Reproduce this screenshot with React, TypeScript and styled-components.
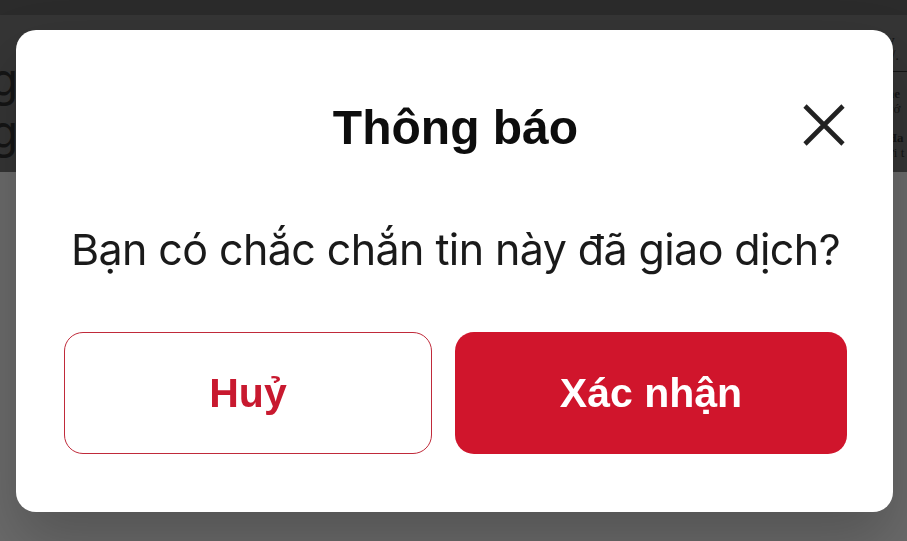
import React from 'react'
import styled, { createGlobalStyle } from 'styled-components'

const GlobalStyle = createGlobalStyle`
  html, body {
    margin: 0;
    padding: 0;
    background: #6b6b6b;
    overflow: hidden;
  }
  * {
    box-sizing: border-box;
  }
`

const Screen = styled.div`
  width: 907px;
  height: 541px;
  display: flex;
  flex-direction: column;
  overflow: hidden;
`

const StatusBar = styled.div`
  height: 15px;
  background: #2b2b2b;
`

const PageHeader = styled.div`
  height: 157px;
  background: #353535;
  display: flex;
  justify-content: space-between;
  overflow: hidden;
`

const HeaderLeft = styled.div`
  display: flex;
  flex-direction: column;
  padding-top: 38px;
  margin-left: -10px;
  font-family: Inter, sans-serif;
  font-size: 46px;
  line-height: 52px;
  color: #151515;
`

const HeaderRight = styled.div`
  width: 20px;
  padding-top: 18px;
  font-family: 'Liberation Serif', serif;
  color: #151515;
  display: flex;
  flex-direction: column;
`

const SideLine = styled.span<{ $bold?: boolean; $size?: number }>`
  font-size: ${p => p.$size || 13}px;
  font-weight: ${p => (p.$bold ? 700 : 400)};
  line-height: 15px;
  white-space: nowrap;
`

const SideRule = styled.div`
  height: 1px;
  background: #151515;
  margin: 8px 0 14px;
`

const SideGap = styled.div`
  height: 14px;
`

const PageBody = styled.div`
  flex: 1;
  background: #6b6b6b;
`

const Modal = styled.div`
  position: fixed;
  left: 16px;
  top: 30px;
  width: 877px;
  height: 482px;
  background: #ffffff;
  border-radius: 20px;
  box-shadow: 0 30px 60px rgba(0, 0, 0, 0.22);
  padding: 68px 46px 58px 48px;
  display: flex;
  flex-direction: column;
`

const ModalHeader = styled.div`
  display: grid;
  grid-template-columns: 1fr auto 1fr;
  align-items: center;
  height: 60px;
`

const Title = styled.h2`
  grid-column: 2;
  margin: 0;
  font-family: 'Liberation Sans', Arial, sans-serif;
  font-weight: 700;
  font-size: 48px;
  line-height: 60px;
  color: #0d0d0d;
`

const CloseButton = styled.button`
  grid-column: 3;
  justify-self: end;
  margin: -6px 0 0 0;
  width: 46px;
  height: 46px;
  padding: 0;
  border: none;
  background: transparent;
  display: flex;
  align-items: center;
  justify-content: center;
  cursor: pointer;
`

const Message = styled.p`
  margin: 65px 0 0;
  text-align: center;
  white-space: nowrap;
  font-family: Inter, sans-serif;
  font-size: 43px;
  letter-spacing: -0.6px;
  line-height: 52px;
  color: #1a1a1a;
`

const Actions = styled.div`
  margin-top: 57px;
  display: grid;
  grid-template-columns: 368fr 392fr;
  gap: 23px;
`

const ActionButton = styled.button<{ $primary?: boolean }>`
  height: 122px;
  border-radius: 19px;
  display: flex;
  align-items: center;
  justify-content: center;
  font-family: 'Liberation Sans', Arial, sans-serif;
  font-weight: 700;
  font-size: 41px;
  cursor: pointer;
  border: ${p => (p.$primary ? 'none' : '1.5px solid #c02a3a')};
  background: ${p => (p.$primary ? '#d0152c' : '#ffffff')};
  color: ${p => (p.$primary ? '#ffffff' : '#c8192f')};
`

const CloseIcon = () => (
  <svg width="46" height="46" viewBox="0 0 46 46" fill="none">
    <path d="M4 4 L42 42 M42 4 L4 42" stroke="#222" strokeWidth="4.6" />
  </svg>
)

export default function App() {
  return (
    <>
      <GlobalStyle />
      <Screen>
        <StatusBar />
        <PageHeader>
          <HeaderLeft>
            <span>g</span>
            <span>g</span>
          </HeaderLeft>
          <HeaderRight>
            <SideLine $bold $size={15}>v</SideLine>
            <SideLine $size={15}>t/.</SideLine>
            <SideRule />
            <SideLine $bold>ne</SideLine>
            <SideLine>vớ</SideLine>
            <SideGap />
            <SideLine $bold>Ha</SideLine>
            <SideLine>ới t</SideLine>
          </HeaderRight>
        </PageHeader>
        <PageBody />
      </Screen>
      <Modal>
        <ModalHeader>
          <Title>Thông báo</Title>
          <CloseButton aria-label="Đóng">
            <CloseIcon />
          </CloseButton>
        </ModalHeader>
        <Message>Bạn có chắc chắn tin này đã giao dịch?</Message>
        <Actions>
          <ActionButton>Huỷ</ActionButton>
          <ActionButton $primary>Xác nhận</ActionButton>
        </Actions>
      </Modal>
    </>
  )
}
